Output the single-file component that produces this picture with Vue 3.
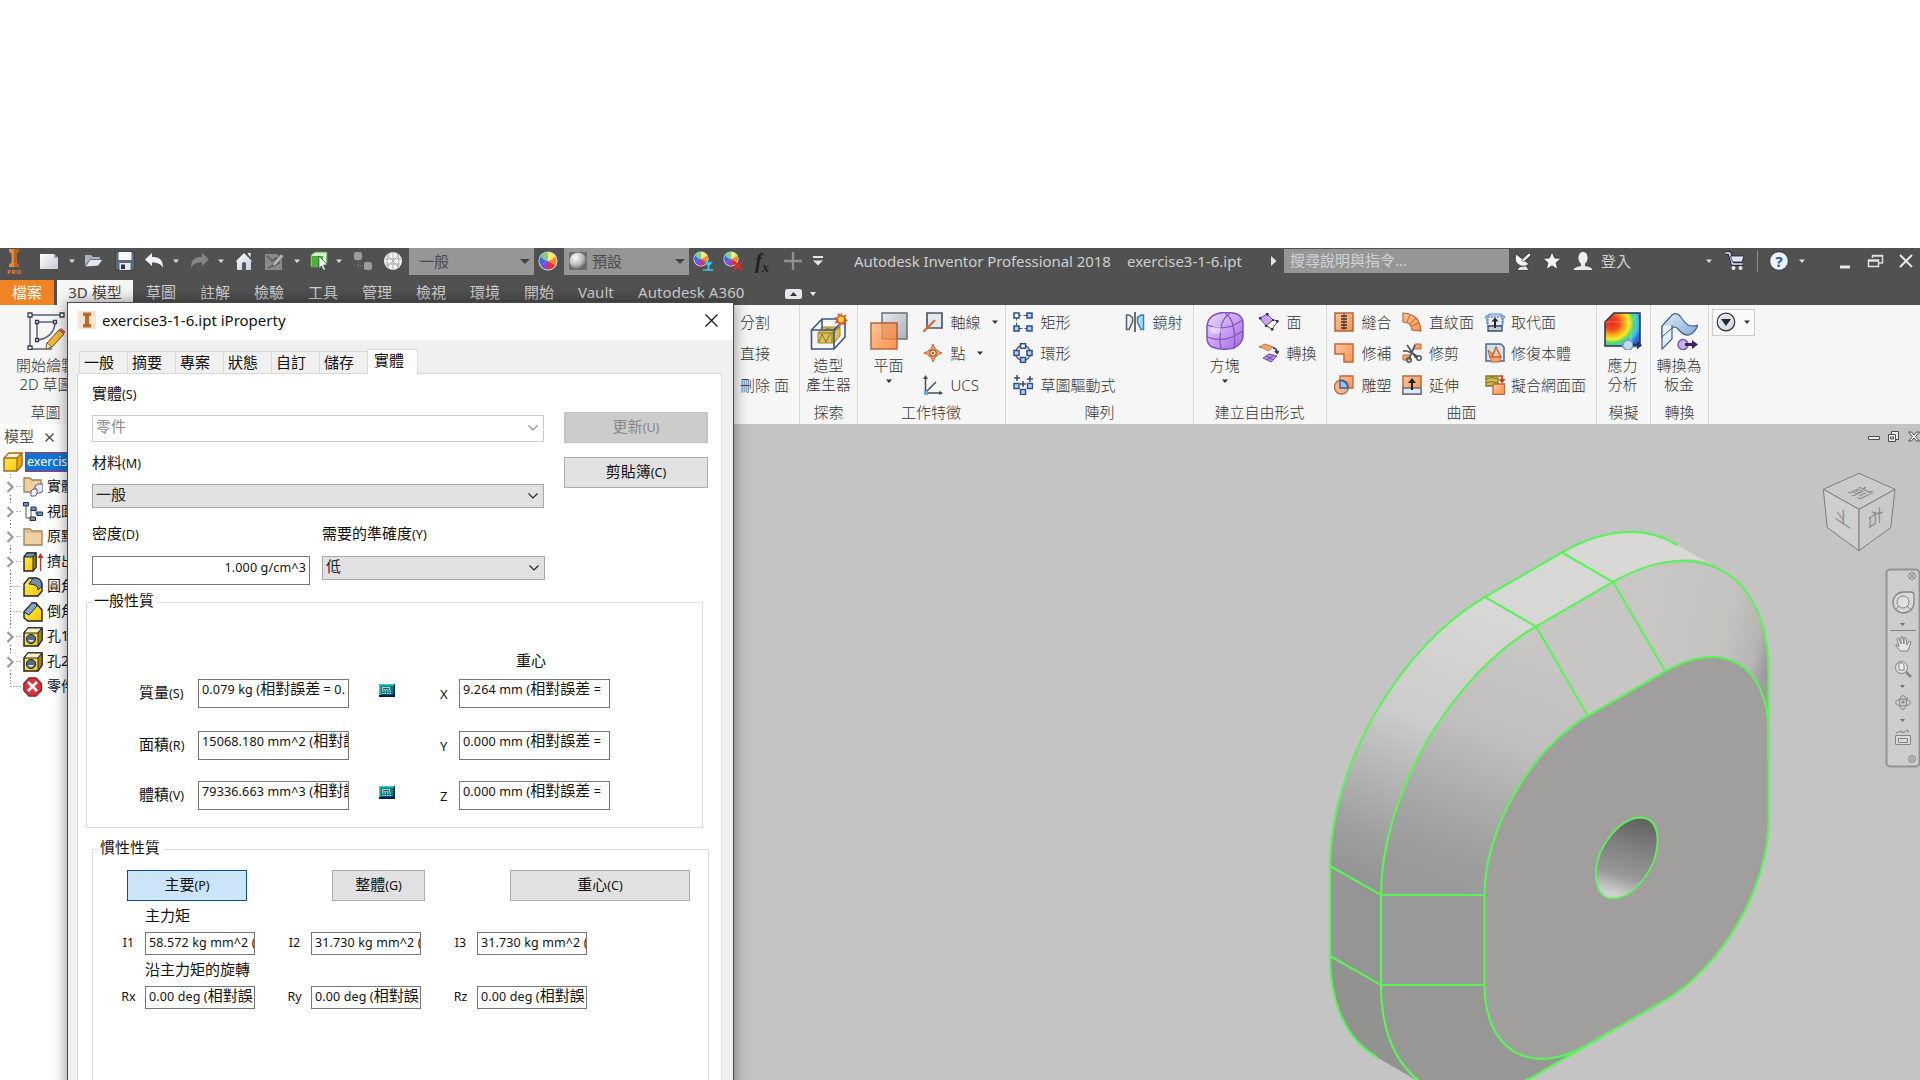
<script setup>
import { h } from 'vue'

// Chinese runs are set larger than the Latin text around them
const Mixed = (props) =>
  props.t.split(/([\u4e00-\u9fff]+)/).filter(Boolean).map((s) => (/[\u4e00-\u9fff]/.test(s) ? h('span', { class: 'cjk' }, s) : s))
Mixed.props = ['t']

const quick = [
  ['logo', 6, 16, 26], ['new', 17, 20, 20], ['down', 9, 8, 8], ['open', 8, 20, 20], ['save', 11, 20, 20],
  ['undo', 9, 20, 20], ['down', 8, 8, 8], ['redo', 10, 20, 20], ['down', 7, 8, 8], ['home', 9, 20, 20],
  ['sketchoff', 10, 20, 20], ['down', 9, 8, 8], ['select', 9, 20, 20], ['down', 5, 8, 8], ['balls', 10, 20, 20], ['globe', 10, 20, 20],
]
const tabs = ['草圖', '註解', '檢驗', '工具', '管理', '檢視', '環境', '開始']
const pages = ['一般', '摘要', '專案', '狀態', '自訂', '儲存']
const surface = [
  [['stitch', '縫合'], ['patch', '修補'], ['sculpt', '雕塑']],
  [['ruled', '直紋面'], ['trim', '修剪'], ['extend', '延伸']],
  [['replace', '取代面'], ['repair', '修復本體'], ['mesh', '擬合網面面']],
]
const tree = [
  ['tfolderbody', '實體', true], ['tview', '視圖', true], ['tfolder', '原點', true], ['textrude', '擠出', true],
  ['tfillet', '圓角', false], ['tchamfer', '倒角', false], ['thole', '孔1', true], ['thole', '孔2', true], ['tend', '零件', false],
]
const physical = [
  ['質量(S)', '0.079 kg (相對誤差 = 0.', true, 'X', '9.264 mm (相對誤差 ='],
  ['面積(R)', '15068.180 mm^2 (相對誤', false, 'Y', '0.000 mm (相對誤差 ='],
  ['體積(V)', '79336.663 mm^3 (相對誤', true, 'Z', '0.000 mm (相對誤差 ='],
]
const moments = [['I1', '58.572 kg mm^2 ('], ['I2', '31.730 kg mm^2 ('], ['I3', '31.730 kg mm^2 (']]
const rotations = [['Rx', '0.00 deg (相對誤'], ['Ry', '0.00 deg (相對誤'], ['Rz', '0.00 deg (相對誤']]
</script>

<template>
  <div class="screen">
    <svg class="defs" width="0" height="0" aria-hidden="true">
      <defs>
        <linearGradient id="gw" x1="0" y1="0" x2="1" y2="1"><stop offset="0" stop-color="#fff" /><stop offset="1" stop-color="#c3c9d6" /></linearGradient>
        <linearGradient id="go" x1="0" y1="0" x2="1" y2="1"><stop offset="0" stop-color="#ffc59a" /><stop offset="1" stop-color="#f8924f" /></linearGradient>
        <linearGradient id="gb" x1="0" y1="0" x2="1" y2="1"><stop offset="0" stop-color="#e3ecfa" /><stop offset="1" stop-color="#7fa3d6" /></linearGradient>
        <linearGradient id="gp" x1="0" y1="0" x2="1" y2="1"><stop offset="0" stop-color="#eddcff" /><stop offset="1" stop-color="#a566e4" /></linearGradient>
        <linearGradient id="gg" x1="0" y1="0" x2="1" y2="1"><stop offset="0" stop-color="#e8eaee" /><stop offset="1" stop-color="#aab0ba" /></linearGradient>
        <linearGradient id="gy" x1="0" y1="0" x2="1" y2="1"><stop offset="0" stop-color="#fff060" /><stop offset="1" stop-color="#f4c400" /></linearGradient>
        <radialGradient id="gball" cx=".35" cy=".3" r=".75"><stop offset="0" stop-color="#fff" /><stop offset=".6" stop-color="#b9b9b9" /><stop offset="1" stop-color="#555" /></radialGradient>
        <radialGradient id="gfea" cx=".2" cy=".3" r=".95"><stop offset="0" stop-color="#e8281c" /><stop offset=".22" stop-color="#ee4a1e" /><stop offset=".38" stop-color="#f8a81c" /><stop offset=".52" stop-color="#f2ee28" /><stop offset=".64" stop-color="#5cd66a" /><stop offset=".76" stop-color="#3cc8e8" /><stop offset=".9" stop-color="#3466d6" /></radialGradient>
      </defs>
      <symbol id="logo" viewBox="0 0 16 26"><path d="M3 1h10v3l-2.500 1.500v9L13 16.500V19H3v-2.500l2.500-2v-9L3 4z" fill="#e08a3a" /><path d="M8 1h5v3l-2.500 1.500v9L13 16.500V19H8z" fill="#b9621c" /><text x="1" y="25.500" font-size="6" font-weight="700" textLength="14" fill="#e08a3a" font-family="Noto Sans, sans-serif">PRO</text></symbol>
      <symbol id="new" viewBox="0 0 20 20"><path d="M1 3h14l4 4v11H1z" fill="url(#gw)" /><path d="M15 3v4h4z" fill="#9aa2b2" /></symbol>
      <symbol id="down" viewBox="0 0 8 8"><path d="M1 2.500h6L4 6z" fill="#ddd" /></symbol>
      <symbol id="dark" viewBox="0 0 8 8"><path d="M1 2.500h6L4 6z" fill="#333" /></symbol>
      <symbol id="open" viewBox="0 0 20 20"><path d="M1 16V4h6l2 2h7v3" fill="#aab4c4" /><path d="M1 16 6 8.500h13L14 15z" fill="#e4e8f0" stroke="#3d4452" stroke-width=".7" /></symbol>
      <symbol id="save" viewBox="0 0 20 20"><path d="M.5 1h19v18H.5z" fill="#5c6a80" stroke="#39404c" /><path d="M3.500 1h13v8h-13z" fill="#f4f6fa" /><path d="M4.500 12h11v7h-11z" fill="#e6e9ee" /><path d="M6 13.500h4V18H6z" fill="#2f3640" /></symbol>
      <symbol id="undo" viewBox="0 0 20 20"><path d="M1 8.500 8 2v4c7 0 11 2 11 11-2-4-5-5.500-11-5.500V15z" fill="#f1f3f7" /></symbol>
      <symbol id="redo" viewBox="0 0 20 20"><path d="M19 8.500 12 2v4C5 6 1 8 1 17c2-4 5-5.500 11-5.500V15z" fill="#858585" /></symbol>
      <symbol id="home" viewBox="0 0 20 20"><path d="M1.500 10.500 10 2l8.500 8.500h-1.500V19H3v-8.500z" fill="url(#gw)" /><path d="M13.500 2h3v4.500z" fill="#fff" /><path d="M8 12q2-2 4 0v7H8z" fill="#525a68" /></symbol>
      <symbol id="sketchoff" viewBox="0 0 20 20"><path d="M1 3h12l5 5v11H1z" fill="#8a8a8a" /><path d="m3 5 5 5 4-3 3 5-11 5" stroke="#5a5a5a" stroke-width="1.700" fill="none" /><path d="m9 12 8-9 3 2-8 9-4 1z" fill="#b5b5b5" stroke="#5a5a5a" stroke-width=".8" /></symbol>
      <symbol id="select" viewBox="0 0 20 20"><path d="M5 1h12v11l-4 4H1V4z" fill="#d9efd0" stroke="#4a9a3a" /><path d="M2 5h11v11H2z" fill="#4fae3c" /><path d="m9 5 8.500 9h-4l2 4.500-2 1-2-4.500-2.500 2.500z" fill="#fff" stroke="#333" stroke-width=".7" /></symbol>
      <symbol id="balls" viewBox="0 0 20 20"><rect x="1" y="1" width="8" height="8" rx="2" fill="#9c9c9c" /><rect x="11" y="11" width="8" height="8" rx="2" fill="#9c9c9c" /><path d="M5 9v6h6" stroke="#888" stroke-dasharray="1 1" fill="none" /></symbol>
      <symbol id="globe" viewBox="0 0 20 20"><circle cx="10" cy="10" r="9" fill="#f4f4f4" /><path d="M2 8h16M3 13h14M10 1v18M6 2q-4 8 0 16M14 2q4 8 0 16M4 4l12 12M16 4 4 16" stroke="#a3a8b0" stroke-width=".9" fill="none" /></symbol>
      <symbol id="wheel" viewBox="0 0 20 20"><circle cx="10" cy="10" r="9.500" fill="#dce3f0" /><path d="M10 10V1.500A8.500 8.500 0 0 1 17.400 5.700z" fill="#f7e23a" /><path d="M10 10 17.400 5.700A8.500 8.500 0 0 1 17.400 14.200z" fill="#f08b28" /><path d="M10 10l7.400 4.200A8.500 8.500 0 0 1 10 18.500z" fill="#e23838" /><path d="M10 10v8.500A8.500 8.500 0 0 1 2.600 14.200z" fill="#8a45d8" /><path d="M10 10 2.600 14.200A8.500 8.500 0 0 1 2.600 5.700z" fill="#386ee2" /><path d="M10 10 2.600 5.700A8.500 8.500 0 0 1 10 1.500z" fill="#4dbb4c" /><ellipse cx="10" cy="6" rx="6" ry="4" fill="#fff" opacity=".3" /></symbol>
      <symbol id="wheelf" viewBox="0 0 20 20"><use href="#wheel" width="16" height="16" /><path d="M11 11h9l-3.500 4v4h-2v-4z" fill="#45c6ee" stroke="#1688b8" stroke-width=".6" /><path d="M10 19h10" stroke="#45c6ee" stroke-width="1.500" /></symbol>
      <symbol id="wheelx" viewBox="0 0 20 20"><use href="#wheel" width="16" height="16" /><path d="m11 11 8 8m0-8-8 8" stroke="#e02b20" stroke-width="2.200" /></symbol>
      <symbol id="ball" viewBox="0 0 20 20"><path d="M0 0h20v20H0z" fill="#6d6d6d" /><circle cx="10" cy="10" r="9.500" fill="url(#gball)" /></symbol>
      <symbol id="plus" viewBox="0 0 18 18"><path d="M9 0v18M0 9h18" stroke="#909090" stroke-width="2.400" /></symbol>
      <symbol id="menu" viewBox="0 0 12 10"><path d="M1 0h10v2H1zM1 4.500h10L6 9.500z" fill="#e4e4e4" /></symbol>
      <symbol id="dish" viewBox="0 0 20 20"><path d="M3.500 19.500h12.500l-3-5-6 1z" fill="#dfe3ea" stroke="#222" stroke-width=".7" /><path d="M3 3Q0 12 8 15q5 1 8-2z" fill="#f2f4f8" stroke="#222" stroke-width=".7" /><path d="m8.500 9 7.500-7 2 2-7.500 7z" fill="#fff" stroke="#222" stroke-width=".6" /></symbol>
      <symbol id="star" viewBox="0 0 20 20"><path d="m10 1 2.600 6 6.400.5-5 4.200 1.700 6.600L10 14.800l-5.700 3.500L6 11.700 1 7.500 7.400 7z" fill="#eef1f6" stroke="#333" stroke-width=".7" /></symbol>
      <symbol id="user" viewBox="0 0 20 20"><ellipse cx="10" cy="7" rx="4.600" ry="6.200" fill="#f0f2f6" /><path d="M8 12h4v3q7 1 7.500 4H.5Q1 16 8 15z" fill="#e6e9ef" /></symbol>
      <symbol id="cart" viewBox="0 0 20 20"><path d="M.5 2h4l3 11h10" fill="none" stroke="#1d2340" stroke-width="3.600" /><path d="M.5 2h4l3 11h10" fill="none" stroke="#e8ecf6" stroke-width="1.700" /><path d="M5.500 5h13.500l-2 6H7.500z" fill="#dfe5f4" stroke="#1d2340" stroke-width=".8" /><circle cx="8.500" cy="17" r="2" fill="#e8ecf6" /><circle cx="15.500" cy="17" r="2" fill="#e8ecf6" /></symbol>
      <symbol id="help" viewBox="0 0 20 20"><circle cx="10" cy="10" r="9.300" fill="#eef3fb" stroke="#20242c" stroke-width=".8" /><text x="10" y="15.500" text-anchor="middle" font-size="15" font-weight="700" fill="#2459b4" font-family="Noto Sans, sans-serif">?</text></symbol>

      <symbol id="bsketch" viewBox="0 0 38 38"><path d="M3 3h32M3 3v34h22M10 10h18c0 10-7 17-18 18z" fill="none" stroke="#5a6273" stroke-width="1.500" /><g fill="#fff" stroke="#353d4d" stroke-width="1.300"><path d="M1 1h4v4H1zM33 1h4v4h-4zM1 34h4v3.500H1zM8.500 8.500h3v3h-3zM26.500 8.500h3v3h-3zM8.500 26.500h3v3h-3z" /></g><path d="m20 31 12-13 5 4-12 13-6 2z" fill="#f3b63a" stroke="#6d4a12" /><path d="m32 18 2-2 5 4-2 2z" fill="#c85a5a" /><path d="m20 31-1 6 6-2z" fill="#fff2d0" stroke="#6d4a12" stroke-width=".7" /></symbol>
      <symbol id="bshape" viewBox="0 0 38 38"><path d="M8 21 13 15h17v9l-6 7H8z" fill="#dcc25c" stroke="#a3842a" /><path d="M8 21h14v10M22 21l8-6M9 30l3-8 4 8 4-8M14 18l4-2 4 2 5-3" fill="none" stroke="#8f7220" stroke-width="1" /><path d="M1.500 18 12 7h23v18L24 37H1.500zM1.500 18H24v19M24 18 35 7M12 7v10" fill="none" stroke="#3c587c" stroke-width="1.600" /><path d="m31 0 1.500 4 4-1.500-1.500 4L38 8.500 34.500 10l1 4-3.500-2-2.500 3-1-4-4 .5 2-3.500L24 5.500l4-.5-.5-4 3 2z" fill="#e8521c" /><circle cx="31" cy="7.500" r="3" fill="#ffd84a" /></symbol>
      <symbol id="bplane" viewBox="0 0 38 38"><path d="M12 1h25v26H12z" fill="url(#gg)" stroke="#6a6f78" stroke-width="1.500" /><path d="M1 11h26v26H1z" fill="url(#go)" stroke="#b9683c" stroke-width="1.500" /><path d="M12 11h15v16H12z" fill="#e38650" opacity=".45" stroke="#8a4b2c" /></symbol>
      <symbol id="bbox" viewBox="0 0 38 38"><path d="M8 3Q18-2 31 2q6 3 6 9v14q-1 7-9 11-12 3-22-1-5-3-5-9V14Q2 6 8 3z" fill="url(#gp)" stroke="#8452bd" stroke-width="1.500" /><path d="M1 13q14 5 25 1l11-6M1 25q14 5 25 0l11-6M15 16q-2 11 0 20M15 16q1-9 9-15M27 14q3 10 1 22M27 14q-1-8-8-13" fill="none" stroke="#8452bd" stroke-width="1.200" /><ellipse cx="10" cy="18" rx="6" ry="4" fill="#fff" opacity=".4" /></symbol>
      <symbol id="bfea" viewBox="0 0 38 38"><path d="M1 10 10 1h26v33H1z" fill="url(#gfea)" stroke="#26324a" stroke-width="1.500" /><path d="M1 10h26v24M27 10l9-9" fill="none" stroke="#fff" opacity=".25" /><path d="M18 34h17" stroke="#8fb0dc" stroke-width="3" /><circle cx="24" cy="33" r="5" fill="#c4daf4" stroke="#7a9ac8" stroke-width="1.500" /><path d="M29 31.500h4v-3l5 4.500-5 4.500v-3h-4z" fill="#1f3a58" /></symbol>
      <symbol id="bmetal" viewBox="0 0 38 38"><path d="M2 14 12 3q4-3 8 1 5 7 8 9 5 2 10 0-3 8-9 10-5 1-10-5-5-6-8 0L2 26z" fill="url(#gb)" stroke="#42608e" stroke-width="1.200" /><path d="M2 14v23l10-10V13" fill="#e5eefb" stroke="#42608e" stroke-width="1.200" /><path d="m2 25 10-9" stroke="#42608e" /><circle cx="23" cy="32.500" r="5" fill="#c8b0ec" stroke="#7c5ab0" stroke-width="1.500" /><path d="M25 31h7v-3l6 4.500-6 4.500v-3h-7z" fill="#3a2468" /></symbol>

      <symbol id="axis" viewBox="0 0 20 20"><path d="M4 1h15v15H4z" fill="#e4e8ee" stroke="#4d5664" stroke-width="1.700" /><path d="M0 20 12 8" stroke="#d96a34" stroke-width="2.200" /></symbol>
      <symbol id="point" viewBox="0 0 20 20"><path d="m10 1 2 4.500 3.500 3L19 10l-3.500 1.500-3.500 3-2 4.500-2-4.500-3.500-3L1 10l3.500-1.500 3.500-3z" fill="#f5a06a" stroke="#c9663a" /><circle cx="10" cy="10" r="3.200" fill="#ffe7d2" stroke="#a9502a" stroke-width="1.200" /><circle cx="10" cy="10" r="1.200" fill="#a9502a" /></symbol>
      <symbol id="ucs" viewBox="0 0 20 20"><path d="M2.500 18V2M2.500 18H19M3 17 13 7" stroke="#4b4f57" stroke-width="1.500" fill="none" /><path d="M0 4 2.500 0 5 4zM16 16l4 2-4 2z" fill="#4b4f57" /><path d="M1 16h4v4H1z" fill="#5bb0e8" /></symbol>
      <symbol id="rect" viewBox="0 0 20 20"><path d="M3.500 3.500h13M3.500 3.500v13h13" fill="none" stroke="#555" stroke-dasharray="5 2" /><g fill="#b7d0f6" stroke="#2a4f94" stroke-width="1.500"><path d="M1 1h5v5H1z" fill="#fff" /><path d="M14 1h5v5h-5zM1 14h5v5H1zM14 14h5v5h-5z" /></g></symbol>
      <symbol id="circ" viewBox="0 0 20 20"><circle cx="10" cy="10" r="7.500" fill="none" stroke="#555" stroke-width="1.300" /><g fill="#b7d0f6" stroke="#2a4f94" stroke-width="1.500"><path d="M7.500.8h5v4.500h-5z" fill="#fff" /><path d="M1 7.500h5v5H1zM14 7.500h5v5h-5zM7.500 14.500h5v4.700h-5z" /></g></symbol>
      <symbol id="driven" viewBox="0 0 20 20"><path d="M4 0v6M1 3h6M17 1v6M14 4h6M10 6v6M7 9h6" stroke="#444c5c" stroke-width="1.500" /><g fill="#b7d0f6" stroke="#2a4f94" stroke-width="1.400"><path d="M1 8.500h5v5H1zM14.500 8.500h5v5h-5zM7.500 14.500h5v5h-5z" /></g></symbol>
      <symbol id="mirror" viewBox="0 0 20 20"><path d="M1.500 3v14.500H4L7.500 10V5.500L4 3z" fill="#eceff3" stroke="#565e6c" stroke-width="1.500" /><path d="M18.500 3v14.500H16L12.500 10V5.500L16 3z" fill="#a9daf8" stroke="#3483b8" stroke-width="1.500" /><path d="M10 0v20" stroke="#222" stroke-width="1.300" /></symbol>
      <symbol id="face" viewBox="0 0 20 20"><path d="m1 6 7-4 6 6-7 6z" fill="#c9a4f2" stroke="#74539c" /><path d="m14 8 5 1-6 8-6-3z" fill="#fff" stroke="#555" /><g fill="#3a2a50"><path d="M0 5h2.500v2.500H0zM7 1h2.500v2.500H7zM17 8h2.500v2.500H17zM12 16h2.500v2.500H12zM6 13h2.500v2H6zM13 7h2v2h-2z" /></g></symbol>
      <symbol id="convert" viewBox="0 0 20 20"><path d="m0 4 6-3 8 3-5 4Q6 5 0 4z" fill="#f7a468" stroke="#c9744a" /><path d="m4 15 6-4 8 2-6 6z" fill="#b58ae8" stroke="#74539c" /><path d="m7 13 7 4M8 17l7-5" stroke="#74539c" /><path d="M14 5q4 0 4 5m-2-2 2 2.500L20 8" stroke="#333" fill="none" stroke-width="1.300" /></symbol>
      <symbol id="stitch" viewBox="0 0 20 20"><path d="M1 1h18v18H1z" fill="url(#go)" stroke="#b0653c" stroke-width="1.500" /><path d="M10 1v18" stroke="#8a4726" /><path d="M7 4h6M7 7h6M7 10h6M7 13h6M7 16h6" stroke="#333" stroke-width="1.400" /></symbol>
      <symbol id="patch" viewBox="0 0 20 20"><path d="M1 1h18v18h-9v-8H1z" fill="url(#go)" stroke="#c2683a" stroke-width="1.500" /></symbol>
      <symbol id="sculpt" viewBox="0 0 20 20"><path d="M6 1h13v12H6z" fill="url(#go)" stroke="#c2683a" stroke-width="1.300" /><circle cx="7.500" cy="12" r="7" fill="#f8b68a" stroke="#b06a48" stroke-width="1.300" /><path d="M6 5.500q7 0 8 7.500H6z" fill="#9bc1f2" stroke="#2e5ba6" stroke-width="1.300" /></symbol>
      <symbol id="ruled" viewBox="0 0 20 20"><path d="M1 1q17 1 18 18l-9-1Q9 10 1 10z" fill="url(#go)" stroke="#b9683c" stroke-width="1.200" /><path d="m5 10 3-8M8 12l6-6M9 14l8-3" stroke="#b9683c" /></symbol>
      <symbol id="trim" viewBox="0 0 20 20"><path d="M11 6 13 1h6v5h-5zM1 12h7v5H1z" fill="#f8a468" stroke="#c2683a" /><path d="m5 2 9 13M1 8q6-1 15 6M13 2 7 16" stroke="#4e5663" stroke-width="1.700" fill="none" /><circle cx="7" cy="17" r="2.300" fill="none" stroke="#4e5663" stroke-width="1.500" /><circle cx="17" cy="15" r="2.300" fill="none" stroke="#4e5663" stroke-width="1.500" /></symbol>
      <symbol id="extend" viewBox="0 0 20 20"><path d="M1 1h18v18H1z" fill="url(#go)" stroke="#b9683c" stroke-width="1.500" /><path d="M1 13h18v6H1z" fill="#e3eaf4" stroke="#5a6f94" stroke-width="1.300" /><path d="M10 15V6" stroke="#222" stroke-width="2" /><path d="m6 8 4-5 4 5z" fill="#222" /></symbol>
      <symbol id="replace" viewBox="0 0 20 20"><path d="M0 5q3-1 5-3h10q2 2 5 3l-2 2v5H2V7z" fill="#bdd6f8" stroke="#5c8fd6" stroke-width="1.200" /><path d="M3 5h14v9H3z" fill="#e6ecf4" stroke="#5a6a84" stroke-dasharray="2 1" /><path d="M3 14h14v5H3z" fill="#c3cbd8" stroke="#3d4e6c" stroke-width="1.300" /><path d="M10 16V8" stroke="#222" stroke-width="2" /><path d="m6.500 9.500 3.500-4 3.500 4z" fill="#222" /></symbol>
      <symbol id="repair" viewBox="0 0 20 20"><path d="M1 1h15l3 3v14H1z" fill="#d6e0ee" stroke="#4f678c" stroke-width="1.500" /><path d="m11 4 5 10H7z" fill="#f8c09a" stroke="#b9683c" stroke-width="1.400" /><path d="m3 7 5 4-3 4z" fill="#f6a064" stroke="#b9683c" /><path d="M6 14h9v5H6z" fill="#f8a468" stroke="#b9683c" /></symbol>
      <symbol id="mesh" viewBox="0 0 20 20"><path d="M1 1h12v10H1z" fill="#cdbb53" stroke="#857423" stroke-width="1.300" /><path d="M1 4q5-3 12 0M1 8q6-3 12 0" stroke="#857423" fill="none" /><path d="M8 9h11.500v10.500H8z" fill="url(#go)" stroke="#b9683c" stroke-width="1.300" /><path d="M14 1h3v5m-2.500-2 2.500 3 2.500-3" stroke="#e02818" stroke-width="1.700" fill="none" /></symbol>
      <symbol id="circledown" viewBox="0 0 20 20"><circle cx="10" cy="10" r="8.800" fill="url(#gw)" stroke="#333" stroke-width="1.200" /><circle cx="10" cy="10" r="6.800" fill="#dde0e4" /><path d="M5 7h10l-5 7z" fill="#1c2a38" /></symbol>

      <symbol id="tpart" viewBox="0 0 20 20"><path d="M1 6 6 1h13v12l-5 6H1z" fill="url(#gy)" stroke="#a8661c" stroke-width="1.500" /><path d="M2 6 6 2h12l-4 4z" fill="#fff8dc" /><path d="M14 6v12l4-5V2z" fill="#e8ab08" /><path d="M1 6h13v13M14 6l5-5" fill="none" stroke="#a8661c" stroke-width="1.300" /></symbol>
      <symbol id="tfolder" viewBox="0 0 20 20"><path d="M1 2h6l2 2h10v14H1z" fill="#efd0a2" stroke="#9d8056" stroke-width="1.300" /><path d="M1 5h18" stroke="#c5a679" /></symbol>
      <symbol id="tfolderbody" viewBox="0 0 20 20"><path d="M1 1h6l2 2h9v12H1z" fill="#efd0a2" stroke="#9d8056" stroke-width="1.300" /><path d="m12 9 3-2h5v7l-3 2h-5z" fill="#e3e7ee" stroke="#566078" /><path d="m8 14 2-2h4v5l-2 2H8z" fill="#f7f8fa" stroke="#566078" /></symbol>
      <symbol id="tview" viewBox="0 0 20 20"><path d="M3 4v12h6M8 7v9M8 7h5v5h4" stroke="#555" fill="none" /><g fill="#6d93cc" stroke="#20344f"><path d="M.5.5h5v3.500h-5zM8 5h5v3.500H8zM14 10h5.500v3.500H14zM7 15h5.500v3.500H7z" /></g></symbol>
      <symbol id="textrude" viewBox="0 0 20 20"><path d="m1 5 3-4h9v14l-3 4H1z" fill="url(#gy)" stroke="#222" stroke-width="1.400" /><path d="m1 5 3-4h9l-3 4z" fill="#7392b4" stroke="#222" /><path d="m10 5 3-4v14l-3 4z" fill="#a58609" stroke="#222" /><path d="M17.500 19V4" stroke="#d82a20" stroke-width="1.300" /><path d="m14.500 6 3-5 3 5z" fill="#d82a20" /></symbol>
      <symbol id="tfillet" viewBox="0 0 20 20"><path d="M1 7 6 1h7q6 1 6 8v5l-4 5H1z" fill="url(#gy)" stroke="#222" stroke-width="1.400" /><path d="m6 7 4-6h3q6 1 6 8l-4 4q0-6-9-6z" fill="#6f8eb2" stroke="#222" /></symbol>
      <symbol id="tchamfer" viewBox="0 0 20 20"><path d="m1 10 8-9h4l6 7v11H5l-4-3z" fill="url(#gy)" stroke="#222" stroke-width="1.400" /><path d="m1 10 8-9h4l1 3-8 9z" fill="#86a6c8" stroke="#222" /></symbol>
      <symbol id="thole" viewBox="0 0 20 20"><path d="m1 6 4-5h14v12l-4 6H1z" fill="url(#gy)" stroke="#222" stroke-width="1.500" /><path d="m1 6 4-5h14l-4 5z" fill="#fbf3c4" stroke="#222" /><path d="M15 6v13l4-6V1z" fill="#9d8718" stroke="#222" /><circle cx="8" cy="12" r="4.600" fill="#53698c" stroke="#222" /><path d="M5 13q3 4 6 0z" fill="#dce6f4" /></symbol>
      <symbol id="tend" viewBox="0 0 20 20"><path d="M6 1h7l5.500 5.500v7L13 19H6L.8 13.500v-7z" fill="#d8343c" stroke="#7c2c30" stroke-width="1.300" /><path d="m5 5 9 9m0-9-9 9" stroke="#fff" stroke-width="2.700" /></symbol>
      <symbol id="calc" viewBox="0 0 16 13"><path d="M0 0h16v13H0z" fill="#001c50" /><path d="M0 0h15v2H2v9H0z" fill="#22d0cc" /><path d="M1.500 1.500h13v9h-13z" fill="#087f86" /><path d="M3 3h8v2.500H3z" fill="#e8f6e8" /><path d="M4 4.300h6" stroke="#123" /><path d="M3 7h10M3 9.500h10" stroke="#e0f4f0" stroke-dasharray="1.500 1" /></symbol>
      <symbol id="chev" viewBox="0 0 10 6"><path d="m.5.5 4.500 4.500L9.500.5" fill="none" stroke="currentColor" stroke-width="1.100" /></symbol>
    </svg>

    <header class="titlebar">
      <svg v-for="(q, i) in quick" :key="i" :width="q[2]" :height="q[3]" :style="{ marginLeft: q[1] + 'px' }"><use :href="'#' + q[0]" /></svg>
      <div class="drop first"><span>一般</span><i class="tri"></i></div>
      <svg class="wheel" width="20" height="20"><use href="#wheel" /></svg>
      <div class="drop second"><svg width="18" height="18"><use href="#ball" /></svg><span>預設</span><i class="tri"></i></div>
      <svg class="g4" width="20" height="20"><use href="#wheelf" /></svg>
      <svg class="g10" width="20" height="20"><use href="#wheelx" /></svg>
      <span class="fx">f<sub>x</sub></span>
      <svg class="g11" width="18" height="18"><use href="#plus" /></svg>
      <svg class="g10" width="12" height="10"><use href="#menu" /></svg>
      <span class="product">Autodesk Inventor Professional 2018</span>
      <span class="docname">exercise3-1-6.ipt</span>
      <svg class="g29" width="6" height="10" viewBox="0 0 6 10"><path d="M0 0 5.500 5 0 10z" fill="#e4e4e4" /></svg>
      <div class="search">搜尋說明與指令...</div>
      <svg class="g4" width="20" height="20"><use href="#dish" /></svg>
      <svg class="g9" width="20" height="20"><use href="#star" /></svg>
      <svg class="g11" width="20" height="20"><use href="#user" /></svg>
      <span class="login">登入</span>
      <svg class="g74" width="8" height="8"><use href="#down" /></svg>
      <svg class="g12" width="20" height="20"><use href="#cart" /></svg>
      <i class="bar"></i>
      <svg class="g11" width="20" height="20"><use href="#help" /></svg>
      <svg class="g9" width="8" height="8"><use href="#down" /></svg>
      <svg class="winbtns" width="76" height="20" viewBox="0 0 76 20"><path d="M2 14.500h10v3H2z" fill="#e8e8e8" /><path d="M34.500 7V4.500h10v7.500H41M30.500 9h10v6.500h-10zM30.500 10h10M34.500 5h10" fill="none" stroke="#e0e0e0" stroke-width="1.500" /><path d="m62 4 12 12m0-12L62 16" stroke="#e8e8e8" stroke-width="2" /></svg>
    </header>

    <nav class="tabrow">
      <span class="file">檔案</span>
      <span class="active">3D 模型</span>
      <span v-for="t in tabs" :key="t" class="tab">{{ t }}</span>
      <span class="tab vault">Vault</span>
      <span class="tab a360">Autodesk A360</span>
      <svg class="pill" width="32" height="10" viewBox="0 0 32 10"><rect width="17" height="10" rx="2.500" fill="#e6e8ec" /><path d="M5 7h7L8.500 3z" fill="#333" /><path d="M25 3h6l-3 4z" fill="#eee" /></svg>
    </nav>

    <section class="ribbon">
      <div class="panel sketch">
        <div class="body"><div class="big"><svg width="38" height="38"><use href="#bsketch" /></svg><span>開始繪製</span><span>2D 草圖</span></div></div>
        <div class="caption left-cap">草圖</div>
      </div>
      <div class="panel modify">
        <div class="body col"><div class="row">分割</div><div class="row">直接</div><div class="row">刪除 面</div></div>
      </div>
      <div class="panel explore">
        <div class="body"><div class="big"><svg width="40" height="38"><use href="#bshape" /></svg><span>造型</span><span>產生器</span></div></div>
        <div class="caption">探索</div>
      </div>
      <div class="panel work">
        <div class="body">
          <div class="big"><svg width="38" height="38"><use href="#bplane" /></svg><span>平面</span><svg class="bd" width="8" height="8"><use href="#dark" /></svg></div>
          <div class="col">
            <div class="row"><svg width="20" height="20"><use href="#axis" /></svg>軸線<svg class="rd" width="8" height="8"><use href="#dark" /></svg></div>
            <div class="row"><svg width="20" height="20"><use href="#point" /></svg>點<svg class="rd" width="8" height="8"><use href="#dark" /></svg></div>
            <div class="row"><svg width="20" height="20"><use href="#ucs" /></svg>UCS</div>
          </div>
        </div>
        <div class="caption">工作特徵</div>
      </div>
      <div class="panel pattern">
        <div class="body">
          <div class="col c1">
            <div class="row"><svg width="20" height="20"><use href="#rect" /></svg>矩形</div>
            <div class="row"><svg width="20" height="20"><use href="#circ" /></svg>環形</div>
            <div class="row"><svg width="20" height="20"><use href="#driven" /></svg>草圖驅動式</div>
          </div>
          <div class="col"><div class="row"><svg width="20" height="20"><use href="#mirror" /></svg>鏡射</div></div>
        </div>
        <div class="caption">陣列</div>
      </div>
      <div class="panel freeform">
        <div class="body">
          <div class="big"><svg width="38" height="38"><use href="#bbox" /></svg><span>方塊</span><svg class="bd" width="8" height="8"><use href="#dark" /></svg></div>
          <div class="col">
            <div class="row"><svg width="20" height="20"><use href="#face" /></svg>面</div>
            <div class="row"><svg width="20" height="20"><use href="#convert" /></svg>轉換</div>
          </div>
        </div>
        <div class="caption">建立自由形式</div>
      </div>
      <div class="panel surface">
        <div class="body">
          <div v-for="(c, i) in surface" :key="i" class="col" :class="'s' + i">
            <div v-for="r in c" :key="r[0]" class="row"><svg width="20" height="20"><use :href="'#' + r[0]" /></svg>{{ r[1] }}</div>
          </div>
        </div>
        <div class="caption">曲面</div>
      </div>
      <div class="panel simulate">
        <div class="body"><div class="big"><svg width="38" height="38"><use href="#bfea" /></svg><span>應力</span><span>分析</span></div></div>
        <div class="caption">模擬</div>
      </div>
      <div class="panel transform">
        <div class="body"><div class="big"><svg width="38" height="38"><use href="#bmetal" /></svg><span>轉換為</span><span>板金</span></div></div>
        <div class="caption">轉換</div>
      </div>
      <div class="more"><svg width="20" height="20"><use href="#circledown" /></svg><svg width="8" height="8"><use href="#dark" /></svg></div>
    </section>

    <main class="work-area">
      <aside class="browser">
        <div class="bhead"><span>模型</span><svg width="9" height="9" viewBox="0 0 9 9"><path d="m.5.5 8 8m0-8-8 8" stroke="#444" stroke-width="1.200" /></svg></div>
        <div class="root"><svg width="20" height="20"><use href="#tpart" /></svg><span>exercise3-1-6</span></div>
        <div class="tree">
          <div v-for="(n, i) in tree" :key="i" class="node">
            <svg class="twig" width="21" height="25" viewBox="0 0 21 25">
              <path :d="i === 8 ? 'M10.500 0v12.500' : 'M10.500 0v25'" stroke="#777" stroke-dasharray="1 2" />
              <path d="M10.500 12.500h10" stroke="#777" stroke-dasharray="1 2" />
              <template v-if="n[2]"><path d="M5 6h10v14H5z" fill="#fff" /><path d="m7.500 8 5 5-5 5" fill="none" stroke="#9a9a9a" stroke-width="2.200" /></template>
            </svg>
            <svg width="20" height="20"><use :href="'#' + n[0]" /></svg><span>{{ n[1] }}</span>
          </div>
        </div>
      </aside>

      <svg class="viewport" width="1852" height="656" viewBox="68 424 1852 656">
        <defs>
          <linearGradient id="rim" gradientUnits="userSpaceOnUse" x1="1485" y1="600" x2="1370" y2="880"><stop offset="0" stop-color="#d8d8d6" /><stop offset=".45" stop-color="#cdcccc" /><stop offset=".85" stop-color="#a0a0a0" /><stop offset="1" stop-color="#959595" /></linearGradient>
          <linearGradient id="cone" gradientUnits="userSpaceOnUse" x1="1540" y1="640" x2="1450" y2="890"><stop offset="0" stop-color="#c9c7c5" /><stop offset=".4" stop-color="#c0bebe" /><stop offset=".8" stop-color="#a1a1a1" /><stop offset="1" stop-color="#999" /></linearGradient>
          <linearGradient id="coneR" gradientUnits="userSpaceOnUse" x1="1640" y1="610" x2="1772" y2="640"><stop offset="0" stop-color="#c9c7c5" /><stop offset=".65" stop-color="#c4c3c0" /><stop offset=".9" stop-color="#b6b5b3" /><stop offset="1" stop-color="#9c9c9a" /></linearGradient>
          <linearGradient id="hole" gradientUnits="userSpaceOnUse" x1="1646" y1="818" x2="1624" y2="897"><stop offset="0" stop-color="#5f5f5f" /><stop offset=".4" stop-color="#808080" /><stop offset=".75" stop-color="#989898" /><stop offset="1" stop-color="#d0d0d0" /></linearGradient>
        </defs>
        <path d="M68 424h1852v656H68z" fill="#c4c4c4" />
        <path d="M1562 552.500C1605 527.700 1644 525.300 1674 543L1712 565Q1683 548 1613 582z" fill="#d9d8d6" />
        <path d="M1485 597 1562 552.500 1613 582 1536 626.500z" fill="#d7d7d5" />
        <path d="M1485 597C1399.500 646.600 1330 767 1330 866L1381 895C1381 797 1450 676 1536 626.500z" fill="url(#rim)" />
        <path d="M1330 866v90L1381 985V895z" fill="#959595" />
        <path d="M1330 956C1330 1005.500 1347.400 1040.300 1375.500 1056.400L1418 1081Q1381 1045 1381 985z" fill="#929291" />
        <path d="M1536 626.500C1450 676 1381 797 1381 895H1484.500C1484.500 829 1530 749 1587.700 715.700z" fill="url(#cone)" />
        <path d="M1536 626.500 1613 582 1665.300 671.300 1587.700 715.700z" fill="#c8c6c4" />
        <path d="M1613 582C1699 532.600 1768.500 572.600 1768.500 671.500V731C1768.500 665 1722 638 1665.300 671.300z" fill="url(#coneR)" />
        <path d="M1381 895h103.500v90H1381z" fill="#999" />
        <path d="M1381 985C1381 1084 1450 1124.500 1536 1075L1613 1030 1484.500 985z" fill="#979795" />
        <path d="M1587.700 715.700 1665.300 671.300C1722 638 1768.500 665 1768.500 731V821C1768.500 886.800 1722.300 966.900 1665.300 1000L1587.700 1044.700C1530.700 1077.600 1484.500 1051 1484.500 985V895C1484.500 829 1530.700 749 1587.700 715.700z" fill="#a19f9d" />
        <g fill="none" stroke="#5cf25a" stroke-width="2.200">
          <path d="M1677.500 545C1646 525.500 1605 527.700 1562 552.500L1485 597C1399.500 646.600 1330 767 1330 866V956C1330 1005.500 1347.400 1040.300 1377 1057.300" />
          <path d="M1536 1075 1613 1030.300M1381 985V895C1381 797 1450 676 1536 626.500L1613 582C1699 532.600 1768.500 572.600 1768.500 671.500V761M1381 985C1381 1084 1450 1124.500 1536 1075" />
          <path d="M1587.700 715.700 1665.300 671.300C1722 638 1768.500 665 1768.500 731V821C1768.500 886.800 1722.300 966.900 1665.300 1000L1587.700 1044.700C1530.700 1077.600 1484.500 1051 1484.500 985V895C1484.500 829 1530.700 749 1587.700 715.700z" />
          <path d="M1485 597 1536 626.500 1587.700 715.700M1562 552.500 1613 582 1665.300 671.300M1330 866 1381 895H1484.500M1330 956 1381 985H1484.500" />
          <path d="M1640.500 817.500C1652 817.500 1658 827 1657.500 842C1656.500 870 1633 898.500 1612.500 898.500C1601 898.500 1595.500 888 1595.800 873C1596.500 846 1620 818 1640.500 817.500z" fill="url(#hole)" stroke-width="1.800" />
        </g>
        <g stroke="#7d7d7d"><path d="m1859 473.300-35.700 16 35.700 20 36-20z" fill="#cbcbcb" /><path d="m1823.300 489.300 4 38.400 31.700 23v-41.400z" fill="#cfcfcf" /><path d="m1895 489.300-4.300 38.400-31.700 23v-41.400z" fill="#cacaca" /></g>
        <g font-family="Noto Sans CJK TC, sans-serif" font-size="19" fill="#8c8c8c" text-anchor="middle">
          <text transform="matrix(.82 .42 -.88 .44 1855 496)">前</text>
          <text transform="matrix(-.85 -.58 0 -.9 1843 511)">下</text>
          <text transform="matrix(0 .95 -.8 .5 1870 521)">右</text>
        </g>
        <g stroke="#4d4d4d" fill="#eee"><path d="M1868.500 436.500h11v3h-11z" /><path d="M1891.500 431.500h7v8h-7z" /><path d="M1888.500 434.500h7v7h-7z" /><path d="M1890.500 437h3v2h-3z" /><path d="m1908.500 432 3 0 2.500 3 2.500-3 3 0-4 4.500 4 4.500h-3l-2.500-3-2.500 3h-3l4-4.500z" /></g>
        <rect x="1886.500" y="569.500" width="33" height="197" rx="4" fill="#cdcdcd" stroke="#939393" stroke-width="2" />
        <g fill="none" stroke="#858585">
          <circle cx="1912" cy="576" r="3.500" /><path d="m1910 574 4 4m0-4-4 4" /><circle cx="1912" cy="759" r="3.500" /><path d="M1910 758h4M1910 760h4" />
          <path d="M1903 592h8q3 0 3 3v7a10.500 10.500 0 1 1-11-10z" fill="#d8d8d8" stroke-width="1.300" /><circle cx="1903" cy="602" r="6" fill="#e0e0e0" /><path d="m1899 606-4 4m12-4 4 4" />
          <path d="M1890 630.500h26" />
          <path d="m1896 646 4 5h8l3-9-2-1-2 4-1-7h-2v6l-1-7h-2v7l-2-6-2 1 2 8-3-3z" fill="#e3e3e3" />
          <circle cx="1901.500" cy="667.500" r="6" fill="#dedede" /><path d="m1906 672 5 5" stroke-width="2.500" /><path d="M1899 663h3l2 2v5h-5z" fill="#f2f2f2" />
          <ellipse cx="1903" cy="702.500" rx="3.500" ry="7" /><ellipse cx="1903" cy="702.500" rx="7.500" ry="3.500" /><path d="M1901 702h4m-2-2v4M1905 698h3" />
          <path d="M1895.500 735.500h15v9h-15z" fill="#d9d9d9" /><path d="M1898.500 738.500h9v4h-9zM1896 733l6-2v2l6-3v3" />
        </g>
        <path d="M1900 623h5l-2.500 3zM1900 685h5l-2.500 3zM1900 719h5l-2.500 3z" fill="#707070" />
      </svg>
    </main>

    <section class="dialog">
      <header class="dhead">
        <svg width="18" height="18" viewBox="0 0 18 18"><path d="M0 0h18v18H0z" fill="#fbe3cf" /><path d="M5 1.500h8v3l-2 1v7l2 1v3H5v-3l2-1v-7l-2-1z" fill="#b9682a" /></svg>
        <span>exercise3-1-6.ipt iProperty</span>
        <svg class="x" width="13" height="13" viewBox="0 0 13 13"><path d="m.5.500 12 12m0-12-12 12" stroke="#111" stroke-width="1.200" /></svg>
      </header>
      <div class="dtabs"><span v-for="p in pages" :key="p">{{ p }}</span><span class="on">實體</span></div>
      <div class="page">
        <div class="top">
          <div class="left">
            <label class="l1"><Mixed t="實體(S)" /></label>
            <div class="combo off"><span><Mixed t="零件" /></span><svg width="10" height="6"><use href="#chev" /></svg></div>
            <label class="l2"><Mixed t="材料(M)" /></label>
            <div class="combo"><span><Mixed t="一般" /></span><svg width="10" height="6"><use href="#chev" /></svg></div>
          </div>
          <div class="right"><button class="btn gray"><Mixed t="更新(U)" /></button><button class="btn"><Mixed t="剪貼簿(C)" /></button></div>
        </div>
        <div class="density">
          <div class="d1"><label><Mixed t="密度(D)" /></label><div class="field num">1.000 g/cm^3</div></div>
          <div class="d2"><label><Mixed t="需要的準確度(Y)" /></label><div class="combo"><span><Mixed t="低" /></span><svg width="10" height="6"><use href="#chev" /></svg></div></div>
        </div>
        <div class="group general">
          <span class="legend"><Mixed t="一般性質" /></span>
          <div class="cog"><Mixed t="重心" /></div>
          <div v-for="r in physical" :key="r[0]" class="prow">
            <label><Mixed :t="r[0]" /></label><div class="field"><Mixed :t="r[1]" /></div>
            <span class="calc"><svg v-if="r[2]" width="16" height="13"><use href="#calc" /></svg></span>
            <label class="ax">{{ r[3] }}</label><div class="field"><Mixed :t="r[4]" /></div>
          </div>
        </div>
        <div class="group inertia">
          <span class="legend"><Mixed t="慣性性質" /></span>
          <div class="btns"><button class="btn sel"><Mixed t="主要(P)" /></button><button class="btn mid"><Mixed t="整體(G)" /></button><button class="btn wide"><Mixed t="重心(C)" /></button></div>
          <div class="sub"><Mixed t="主力矩" /></div>
          <div class="trio"><div v-for="m in moments" :key="m[0]"><label>{{ m[0] }}</label><div class="field">{{ m[1] }}</div></div></div>
          <div class="sub s2"><Mixed t="沿主力矩的旋轉" /></div>
          <div class="trio"><div v-for="m in rotations" :key="m[0]"><label>{{ m[0] }}</label><div class="field"><Mixed :t="m[1]" /></div></div></div>
        </div>
      </div>
    </section>
  </div>
</template>

<style>
html, body { margin: 0; overflow: hidden; background: #fff; }
.cjk { font-size: 15px; line-height: 1px; letter-spacing: 0; }
</style>

<style scoped>
* { box-sizing: border-box; }
svg { display: block; flex: none; }
.screen { position: relative; width: 1920px; height: 1080px; padding-top: 248px; overflow: hidden; background: #fff; font: 15px/20px "Noto Sans", "Noto Sans CJK TC", sans-serif; white-space: nowrap; }
.defs { position: absolute; }

.titlebar { display: flex; align-items: center; height: 32px; padding-bottom: 6px; background: #515151; color: #cfcfcf; }
.drop { display: flex; align-items: center; flex: none; width: 125px; height: 27px; margin-left: 6px; padding: 0 4px 0 10px; background: #969696; color: #4c4c4c; }
.drop span { flex: 1; }
.second { padding-left: 5px; }
.second span { margin-left: 5px; }
.tri { border: 5px solid transparent; border-top-color: #444; border-bottom: 0; }
.wheel, .g4 { margin-left: 4px; }
.g9 { margin-left: 9px; }
.g10 { margin-left: 10px; }
.g11 { margin-left: 11px; }
.g12 { margin-left: 12px; }
.g29 { margin-left: 29px; }
.g74 { margin-left: 74px; }
.fx { flex: none; width: 18px; margin-left: 12px; font: italic 700 21px/20px "Liberation Serif", serif; color: #222; }
.fx sub { font-size: 14px; line-height: 1px; vertical-align: -4px; }
.product { flex: none; width: 257px; margin-left: 30px; letter-spacing: -.07px; }
.docname { flex: none; width: 115px; margin-left: 16px; }
.search { flex: none; width: 225px; height: 24px; margin: -1px 0 0 7px; padding-left: 6px; background: #969696; color: #d2d2d2; line-height: 22px; }
.login { flex: none; width: 30px; margin-left: 8px; }
.bar { flex: none; width: 1px; height: 22px; margin-left: 12px; background: #8a8a8a; }
.winbtns { margin-left: 32px; }

.tabrow { display: flex; height: 25px; background: #515151; color: #d0d0d0; line-height: 25px; }
.file { width: 54px; background: #f08423; color: #fff; text-align: center; }
.active { width: 76px; margin: 0 13px 0 3px; background: #f6f6f6; color: #444; text-align: center; }
.tab { width: 54px; }
.vault { width: 60px; }
.pill { margin: 9px 0 0 147px; }
.a360 { width: 0; letter-spacing: .08px; }

.ribbon { display: flex; height: 119px; background: #f6f6f6; color: #333; font-weight: 300; }
.panel { display: flex; flex: none; flex-direction: column; border-right: 1px solid #dadada; }
.body { display: flex; flex: none; height: 96px; padding-top: 1px; }
.col { display: flex; flex-direction: column; }
.row { display: flex; align-items: center; height: 31.5px; }
.row > svg:first-child { margin-right: 7.500px; }
.row .rd { margin-left: 10px; }
.big { display: flex; flex-direction: column; align-items: center; padding-top: 6px; line-height: 19px; }
.big > svg:first-child { margin-bottom: 5.500px; }
.bd { margin-top: 2px; }
.caption { height: 22px; line-height: 22px; text-align: center; }
.sketch { width: 92px; border: 0; }
.sketch .big, .explore .big, .simulate .big, .transform .big { width: 100%; }
.left-cap { margin-left: -1px; }
.modify { width: 708px; padding-left: 648px; }
.explore { width: 58px; }
.work { width: 148px; padding-left: 11px; }
.work .big { width: 39px; margin-right: 15px; }
.work .caption, .freeform .caption { margin-left: -12px; }
.pattern { width: 188px; }
.pattern .c1 { width: 112px; }
.pattern .body { padding-left: 7px; }
.freeform { width: 133px; padding-left: 11px; }
.freeform .big { width: 39px; margin-right: 15px; }
.surface { width: 270px; }
.surface .body { padding-left: 7px; }
.surface .s0 { width: 68px; }
.surface .s1 { width: 83px; }
.surface .s2 .row > svg { margin-right: 6px; }
.surface .s1 .row > svg { margin-right: 7px; }
.simulate { width: 54px; }
.simulate .big { padding-right: 2px; }
.transform { width: 58px; }
.transform .big { padding-right: 1px; }
.more { display: flex; align-items: center; gap: 7px; width: 43px; height: 27px; margin: 4px 0 0 3px; padding: 0 0 2px 3px; border: 1px solid #ccc; background: #fafafa; }

.work-area { display: flex; height: 656px; }
.browser { flex: none; width: 68px; overflow: hidden; background: #fff; font-size: 13px; }
.bhead { display: flex; align-items: center; gap: 11px; height: 28px; padding: 0 0 5px 4px; color: #555; font-size: 15px; }
.bhead svg { margin-top: 3px; }
.root { display: flex; gap: 2px; padding-left: 3px; height: 21px; }
.root span { height: 20px; padding-left: 1px; border: 1px solid #c03050; background: #0f74d4; color: #fff; line-height: 17px; font-size: 12.5px; }
.tree { padding-top: 1px; }
.node { display: flex; align-items: center; height: 25px; }
.node .twig { margin-right: 2px; }
.node span { margin-left: 4px; font-size: 14px; line-height: 23px; height: 25px; color: #111; }
.viewport { flex: none; }

.dialog { position: absolute; left: 67px; top: 302px; width: 667px; height: 900px; border: 1px solid #4a4a4a; background: #f0f0f0; box-shadow: 0 0 14px rgba(0, 0, 0, .45); font-size: 12.6px; color: #111; }
.dhead { display: flex; align-items: center; height: 37px; padding: 0 14px 3px 10px; background: #fff; font-size: 15px; }
.dhead span { margin-left: 6px; }
.dhead .x { margin: 1px 1px 0 auto; }
.dtabs { display: flex; align-items: flex-end; height: 33px; padding-left: 11px; font-size: 15px; line-height: 20px; }
.dtabs span { width: 48px; height: 22px; padding-left: 4px; border: 1px solid #d9d9d9; border-right: 0; border-bottom: 0; }
.dtabs .on { width: 51px; height: 25px; margin-bottom: -1px; padding-left: 6px; border-right: 1px solid #d9d9d9; background: #fff; line-height: 21px; }
.page { width: 645px; height: 900px; margin-left: 9px; padding: 9px 0 0 14px; border: 1px solid #d9d9d9; background: #fff; }
label { display: block; }
.top { display: flex; gap: 20px; }
.left { width: 452px; }
.l1 { height: 32px; padding-top: 2px; line-height: 20px; }
.l2 { height: 42px; padding-top: 12px; }
.combo { display: flex; align-items: center; justify-content: space-between; height: 24px; padding: 0 5px 0 3px; border: 1px solid #a8a8a8; background: #e1e1e1; color: #222; }
.combo.off { height: 27px; padding-bottom: 2px; border-color: #ccc; background: #fff; color: #888; }
.right { display: flex; flex-direction: column; gap: 14px; padding-top: 29px; }
.btn { width: 144px; height: 31px; padding: 0; border: 1px solid #adadad; background: #e1e1e1; color: #111; font-family: inherit; font-size: 12.600px; line-height: 28px; }
.btn.gray { border-color: #bfbfbf; background: #ccc; color: #888; }
.density { display: flex; gap: 12px; height: 86px; margin-top: 15px; }
.density label { height: 33px; line-height: 24px; }
.d1 { width: 218px; }
.d2 { width: 223px; }
.field { overflow: hidden; width: 151px; height: 29px; padding: 0 3px; border: 1px solid #777; background: #fff; line-height: 20px; letter-spacing: .12px; }
.num { width: 218px; line-height: 22px; text-align: right; }
.group { position: relative; border: 1px solid #dcdcdc; }
.legend { position: absolute; left: 6px; top: -11px; padding: 0 3px 0 1px; background: #fff; }
.general { width: 617px; height: 226px; margin: -7px 0 0 -6px; }
.cog { height: 76px; padding: 49px 0 0 429px; }
.prow { display: flex; height: 50px; padding-left: 52px; }
.prow:nth-of-type(2) { height: 52px; }
.prow > label { width: 59px; padding-top: 5px; }
.prow .calc { width: 62px; padding: 5px 0 0 30px; }
.prow .ax { width: 48px; padding: 5px 0 0 29px; font-size: 13px; }
.inertia { width: 617px; height: 300px; margin-top: 21px; }
.inertia .legend { left: 6px; }
.btns { display: flex; padding: 20px 0 0 34px; }
.btn.sel { width: 120px; border-color: #0f4f88; background: #cbe4f8; }
.btn.mid { width: 93px; margin-left: 85px; }
.btn.wide { width: 180px; margin-left: 85px; }
.sub { height: 31px; padding: 6px 0 0 52px; line-height: 19px; }
.trio { display: flex; padding-left: 27px; }
.trio > div { display: flex; width: 166px; }
.trio label { width: 25px; padding-right: 8px; line-height: 22px; font-size: 12.500px; text-align: center; }
.trio .field { width: 110px; height: 23px; font-size: 12.500px; }
</style>
